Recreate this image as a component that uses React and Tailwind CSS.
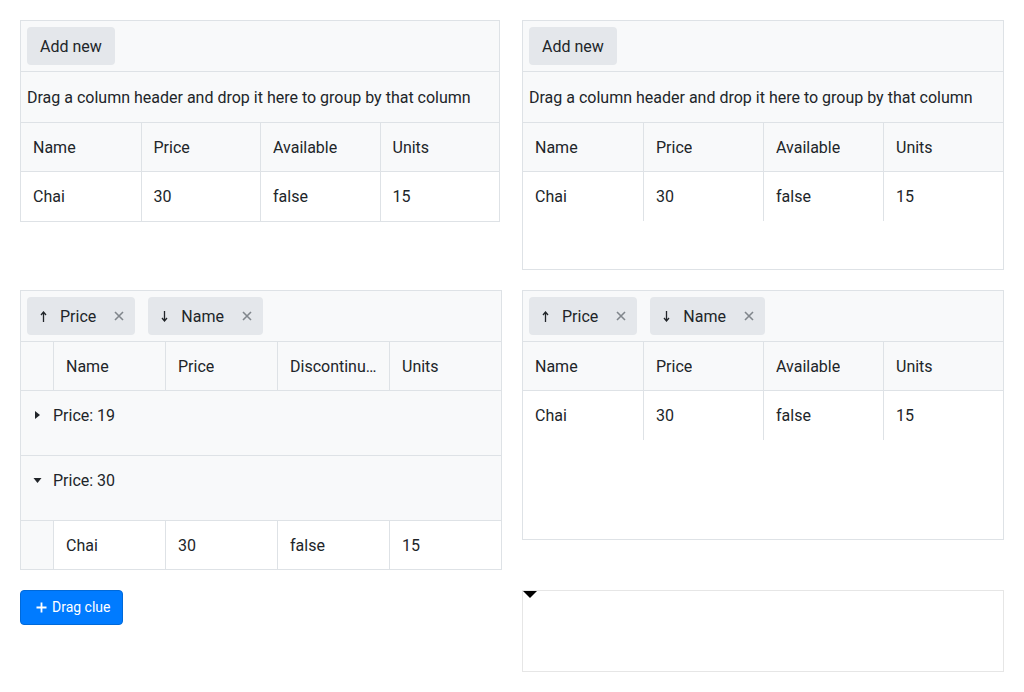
import React from "react";

const cols = ["Name", "Price", "Available", "Units"];
const row = ["Chai", "30", "false", "15"];

function Toolbar({ children }) {
  return (
    <div className="flex items-center gap-[13px] p-[6px] bg-[#f8f9fa] border-b border-[#dee2e6]">
      {children}
    </div>
  );
}

function Arrow({ up }) {
  return (
    <svg width="7" height="11" viewBox="0 0 7 11">
      {up ? (
        <path d="M3.5 11V1.5M1 4l2.5-3 2.5 3" stroke="#212529" strokeWidth="1.3" fill="none" />
      ) : (
        <path d="M3.5 0v9.5M1 7l2.5 3 2.5-3" stroke="#212529" strokeWidth="1.3" fill="none" />
      )}
    </svg>
  );
}

function Chip({ up, label }) {
  return (
    <div className="flex items-center h-[38px] pl-[13px] pr-[11px] rounded bg-[#e4e7eb] text-[#212529]">
      <Arrow up={up} />
      <span className="ml-[13px] pt-[2px]">{label}</span>
      <svg className="ml-[18px]" width="10" height="10" viewBox="0 0 10 10">
        <path d="M1 1l8 8M9 1l-8 8" stroke="#80868c" strokeWidth="1.6" />
      </svg>
    </div>
  );
}

function HeaderRow({ labels, grouped }) {
  return (
    <div
      className={`grid ${grouped ? "grid-cols-[32px_1fr_1fr_1fr_1fr]" : "grid-cols-4"} bg-[#f8f9fa] border-b border-[#dee2e6] h-[49px]`}
    >
      {grouped && <div />}
      {labels.map((c, i) => (
        <div
          key={c}
          className={`flex items-center px-3 pt-[2px] truncate ${i > 0 || grouped ? "border-l border-[#dee2e6]" : ""}`}
        >
          <span className="truncate">{c}</span>
        </div>
      ))}
    </div>
  );
}

function DataRow({ bottom = true }) {
  return (
    <div className={`grid grid-cols-4 h-[49px] ${bottom ? "border-b border-[#dee2e6]" : ""}`}>
      {row.map((c, i) => (
        <div key={i} className={`flex items-center px-3 ${i > 0 ? "border-l border-[#dee2e6]" : ""}`}>
          {c}
        </div>
      ))}
    </div>
  );
}

function GroupRow({ open, label }) {
  return (
    <div className="h-[65px] bg-[#f8f9fa] border-b border-[#dee2e6]">
      <div className="h-[48px] flex items-center pl-3">
        <span className="w-[20px] flex">
          {open ? (
            <svg width="10" height="10" viewBox="0 0 10 10"><path d="M0.5 3h8L4.5 8z" fill="#212529" /></svg>
          ) : (
            <svg width="10" height="10" viewBox="0 0 10 10"><path d="M2 1v8l5-4z" fill="#212529" /></svg>
          )}
        </span>
        <span className="pt-[2px]">{label}</span>
      </div>
    </div>
  );
}

function GridTop({ className }) {
  return (
    <div className={className}>
      <Toolbar>
        <button className="h-[38px] px-[13px] pt-[2px] rounded bg-[#e4e7eb]">Add new</button>
      </Toolbar>
      <div className="h-[51px] flex items-center px-[6px] pt-[2px] bg-[#f8f9fa] border-b border-[#dee2e6]">
        Drag a column header and drop it here to group by that column
      </div>
      <HeaderRow labels={cols} />
      <DataRow bottom={false} />
    </div>
  );
}

export default function App() {
  return (
    <div
      className="p-5 grid grid-cols-2 gap-5 items-start text-[16px] text-[#212529] bg-white min-h-screen"
      style={{ fontFamily: "Roboto, 'Liberation Sans', sans-serif" }}
    >
      {/* top left */}
      <GridTop className="w-[480px] border border-[#dee2e6]" />

      {/* top right */}
      <GridTop className="h-[250px] border border-[#dee2e6]" />

      {/* bottom left */}
      <div className="border border-[#dee2e6]">
        <Toolbar>
          <Chip up label="Price" />
          <Chip label="Name" />
        </Toolbar>
        <HeaderRow labels={["Name", "Price", "Discontinu…", "Units"]} grouped />
        <GroupRow label="Price: 19" />
        <GroupRow open label="Price: 30" />
        <div className="grid grid-cols-[32px_1fr_1fr_1fr_1fr] h-[48px]">
          <div className="bg-[#f8f9fa]" />
          {row.map((c, i) => (
            <div key={i} className="flex items-center px-3 pt-[2px] border-l border-[#dee2e6]">
              {c}
            </div>
          ))}
        </div>
      </div>

      {/* bottom right */}
      <div className="h-[250px] border border-[#dee2e6]">
        <Toolbar>
          <Chip up label="Price" />
          <Chip label="Name" />
        </Toolbar>
        <HeaderRow labels={cols} />
        <DataRow bottom={false} />
      </div>

      {/* drag clue */}
      <div>
        <button className="h-[35px] pl-[15px] pr-[12px] flex items-center gap-[5px] rounded bg-[#007bff] border border-[#0069d9] text-white text-[14px]">
          <svg width="11" height="11" viewBox="0 0 11 11">
            <path d="M5.5 0.5v10M0.5 5.5h10" stroke="white" strokeWidth="1.8" />
          </svg>
          Drag clue
        </button>
      </div>

      <div className="relative h-[82px] border border-[#e6e6e6]">
        <svg className="absolute left-0 top-0" width="14" height="8" viewBox="0 0 14 8">
          <path d="M0 0h14L7 7z" fill="#000" />
        </svg>
      </div>
    </div>
  );
}
